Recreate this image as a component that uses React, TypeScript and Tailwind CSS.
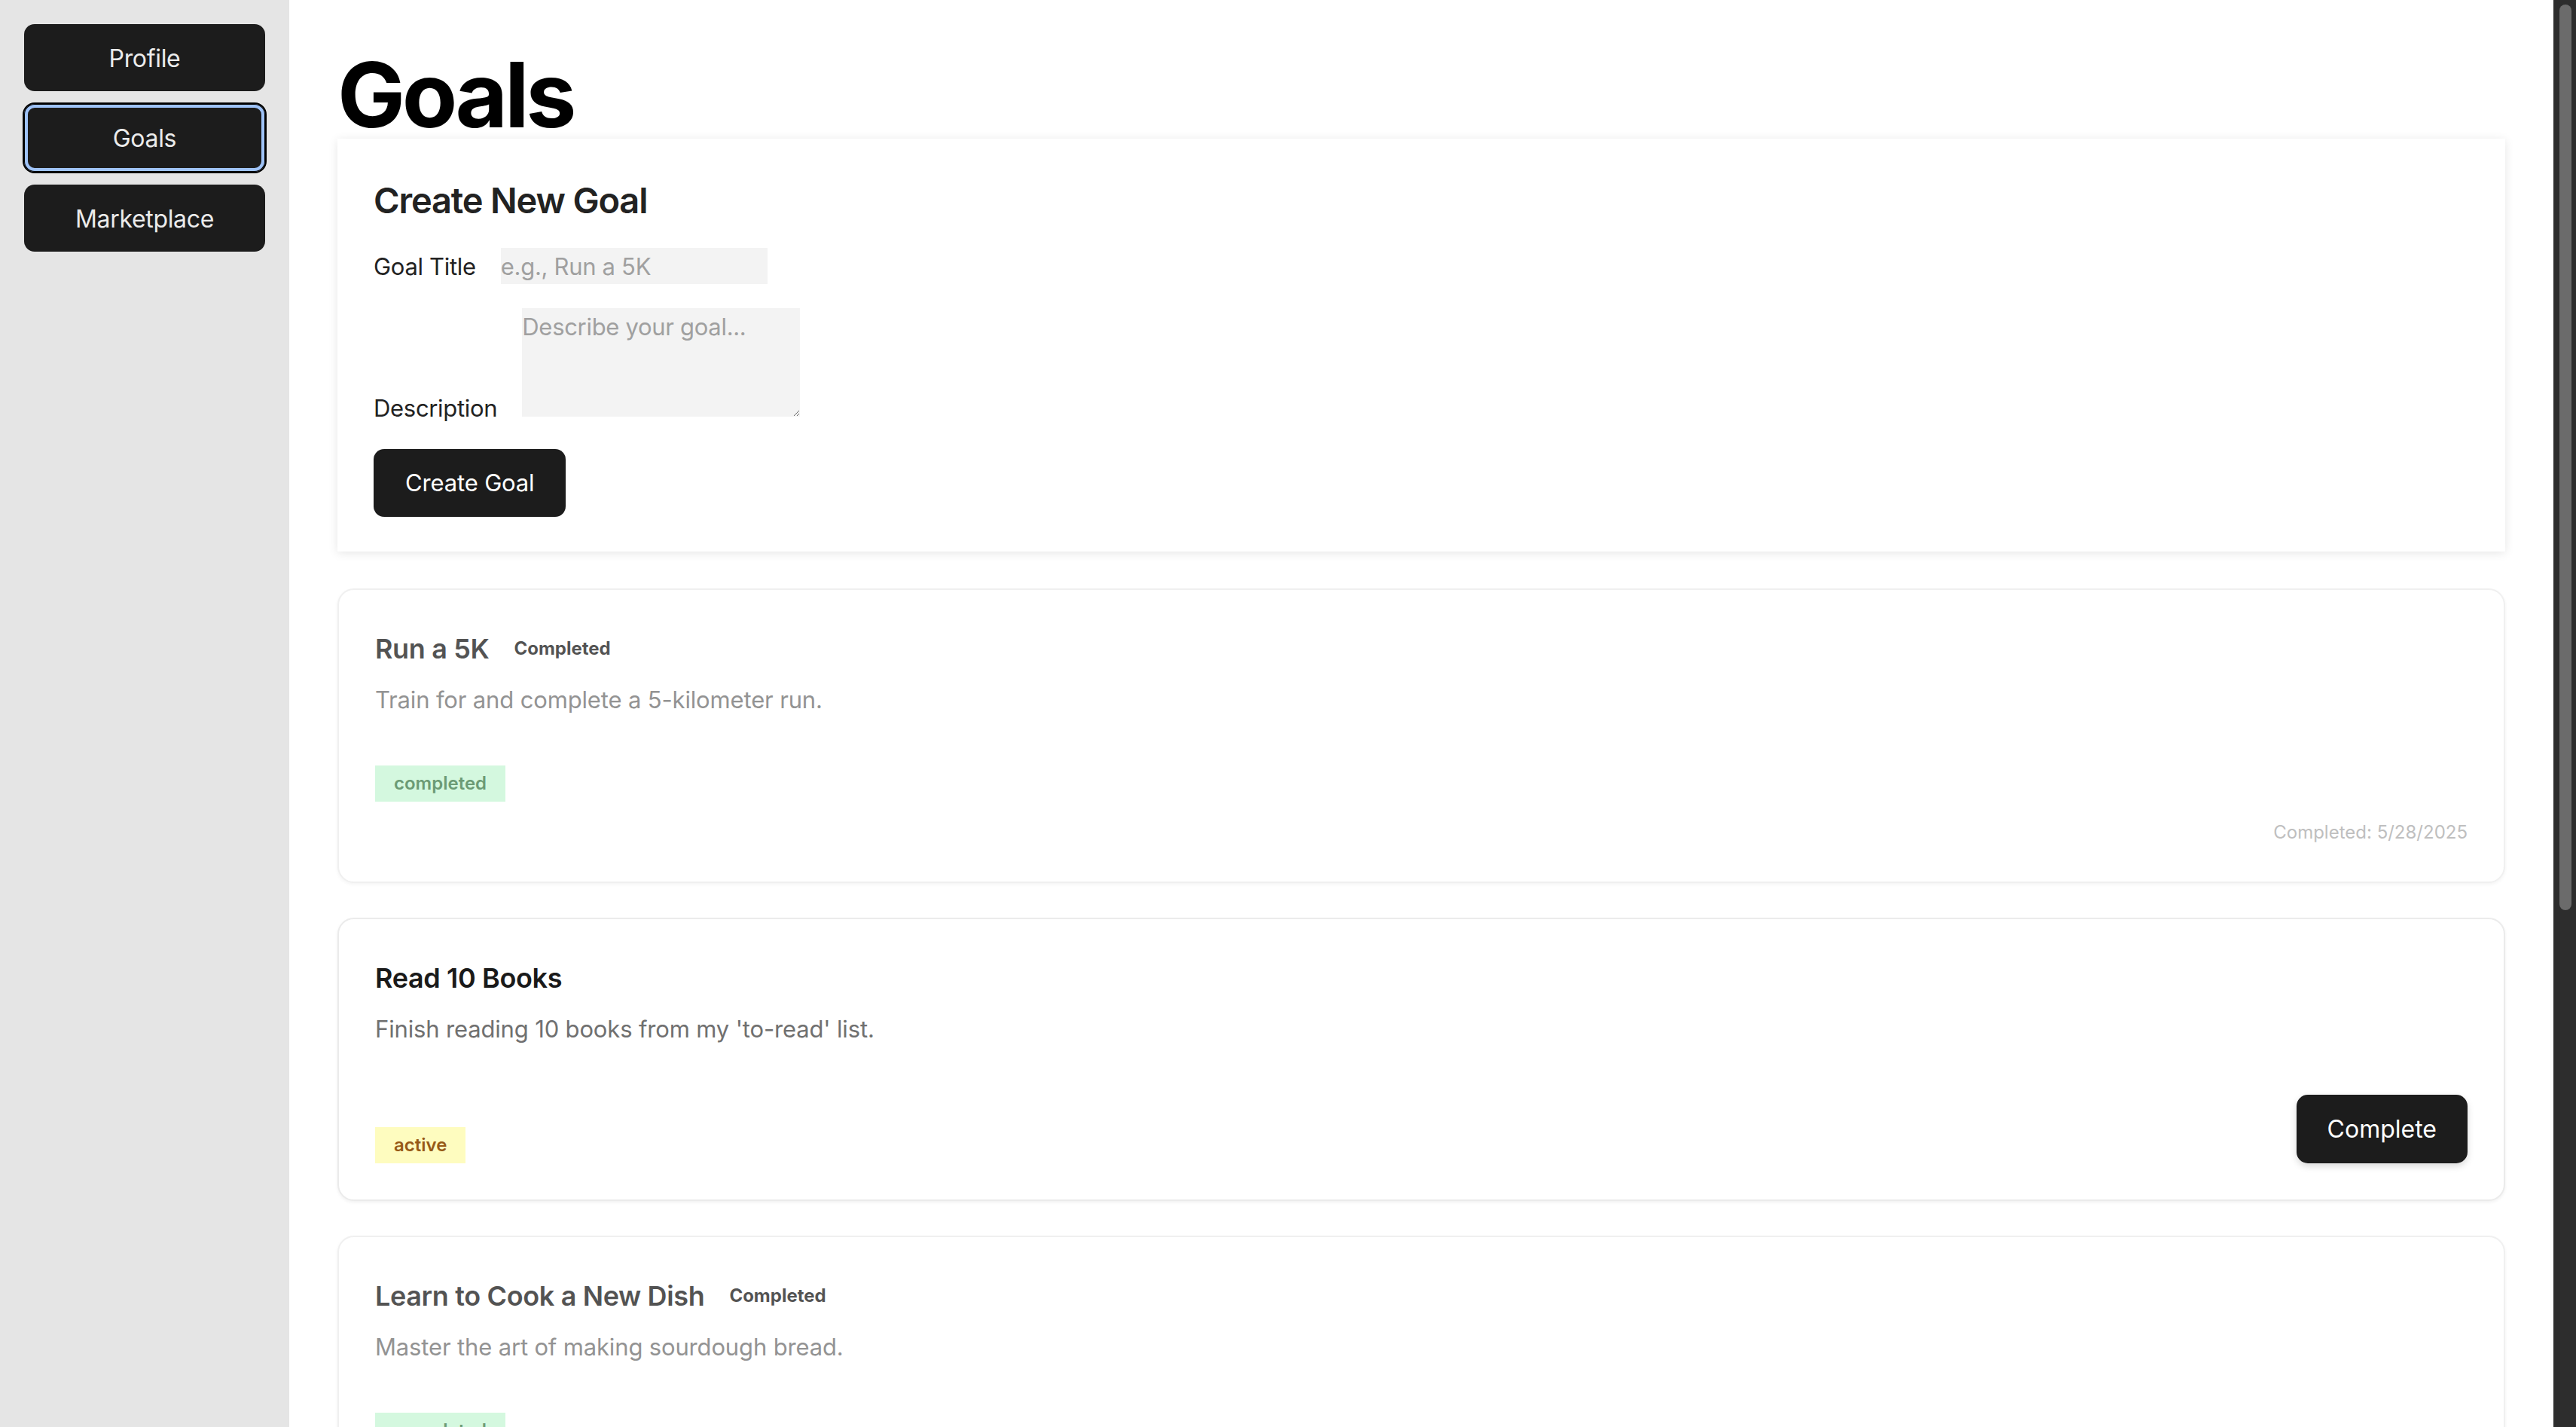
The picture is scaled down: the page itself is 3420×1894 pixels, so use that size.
import React from "react";

type Goal = {
  title: string;
  description: string;
  status: "completed" | "active";
  completedAt?: string;
};

const goals: Goal[] = [
  {
    title: "Run a 5K",
    description: "Train for and complete a 5-kilometer run.",
    status: "completed",
    completedAt: "5/28/2025",
  },
  {
    title: "Read 10 Books",
    description: "Finish reading 10 books from my 'to-read' list.",
    status: "active",
  },
  {
    title: "Learn to Cook a New Dish",
    description: "Master the art of making sourdough bread.",
    status: "completed",
    completedAt: "5/28/2025",
  },
];

function SideButton({ label, active }: { label: string; active?: boolean }) {
  return (
    <button
      className={
        active
          ? "w-[320px] h-[90px] pt-[2px] rounded-[14px] bg-[#1c1c1c] text-[32px] tracking-[-0.01em] text-[#ebebeb] outline-2 outline-black shadow-[inset_0_0_0_1px_#000,inset_0_0_0_5px_#9fc3f8]"
          : "w-[320px] h-[89px] pt-[2px] rounded-[14px] bg-[#1c1c1c] text-[32px] tracking-[-0.01em] text-[#ebebeb]"
      }
    >
      {label}
    </button>
  );
}

function GoalCard({ goal }: { goal: Goal }) {
  const done = goal.status === "completed";
  return (
    <div
      className={
        done
          ? "rounded-[22px] border-2 border-[#ebebeb] bg-white px-[48px] pt-[50px] pb-[51px] shadow-[0_2px_4px_rgba(0,0,0,0.06)] opacity-75"
          : "rounded-[22px] border-2 border-[#ebebeb] bg-white px-[48px] pt-[50px] pb-[48px] shadow-[0_2px_4px_rgba(0,0,0,0.06)]"
      }
    >
      <div className="flex items-center gap-[33px]">
        <h3 className="text-[36px] leading-[56px] font-semibold text-[#1a1a1a] tracking-[-0.01em]">{goal.title}</h3>
        {done && <span className="text-[24px] font-bold text-[#1a1a1a]">Completed</span>}
      </div>
      <p className="mt-[16px] text-[31px] leading-[48px] tracking-[-0.005em] text-[#707070]">{goal.description}</p>
      <div className="mt-[63px] flex items-end justify-between">
        <span
          className={
            done
              ? "h-[48px] px-[25px] flex items-center text-[24px] font-semibold bg-[#c6f6d5] text-[#3a7a47]"
              : "h-[48px] px-[25px] flex items-center text-[24px] font-semibold bg-[#fefcbf] text-[#975a16]"
          }
        >
          {goal.status}
        </span>
        {!done && (
          <button className="h-[91px] px-[41px] rounded-[15px] bg-[#1c1c1c] text-white text-[32px] shadow-[0_4px_10px_rgba(0,0,0,0.15)]">
            Complete
          </button>
        )}
      </div>
      {done && (
        <div className="mt-[26px] text-right text-[24px] leading-[29px] text-[#aaaaaa]">
          Completed: {goal.completedAt}
        </div>
      )}
    </div>
  );
}

export default function App() {
  return (
    <div className="flex h-[1894px] w-[3420px] overflow-hidden bg-white font-[Inter,sans-serif]">
      <aside className="w-[384px] shrink-0 bg-[#e5e5e5] pt-[32px] pl-[32px] flex flex-col gap-[17px]">
        <SideButton label="Profile" />
        <SideButton label="Goals" active />
        <SideButton label="Marketplace" />
      </aside>

      <main className="flex-1 overflow-hidden px-[64px] pt-[68px]">
        <h1 className="text-[120px] leading-[116px] font-bold text-black tracking-[-0.035em]">Goals</h1>

        <section className="bg-white px-[48px] pt-[48px] pb-[46px] shadow-[0_2px_12px_rgba(0,0,0,0.1)]">
          <h2 className="text-[47px] leading-[68px] font-semibold text-[#222] tracking-[-0.025em]">Create New Goal</h2>
          <div className="mt-[29px] flex items-baseline text-[31px] tracking-[-0.01em] text-[#222]">
            <label>Goal Title</label>
            <input
              placeholder="e.g., Run a 5K"
              className="ml-[33px] w-[354px] h-[48px] bg-[#f3f3f3] text-[31px] tracking-[-0.01em] placeholder:text-[#a0a0a0] outline-none"
            />
          </div>
          <div className="mt-[32px] flex items-end text-[31px] tracking-[-0.01em] text-[#222]">
            <label className="leading-[22px]">Description</label>
            <textarea
              placeholder="Describe your goal..."
              className="ml-[33px] w-[369px] h-[144px] bg-[#f3f3f3] pt-[2px] text-[31px] tracking-[-0.01em] placeholder:text-[#a0a0a0] outline-none resize"
            />
          </div>
          <button className="mt-[43px] h-[90px] px-[42px] rounded-[14px] bg-[#1c1c1c] text-white text-[31px] tracking-[-0.005em]">
            Create Goal
          </button>
        </section>

        <div className="mt-[49px] flex flex-col gap-[46px]">
          {goals.map((g) => (
            <GoalCard key={g.title} goal={g} />
          ))}
        </div>
      </main>

      <div className="w-[30px] shrink-0 bg-[#2d2d2d] pt-[6px] pl-[8px]">
        <div className="w-[16px] h-[1202px] rounded-full bg-[#6b6b6b]" />
      </div>
    </div>
  );
}
